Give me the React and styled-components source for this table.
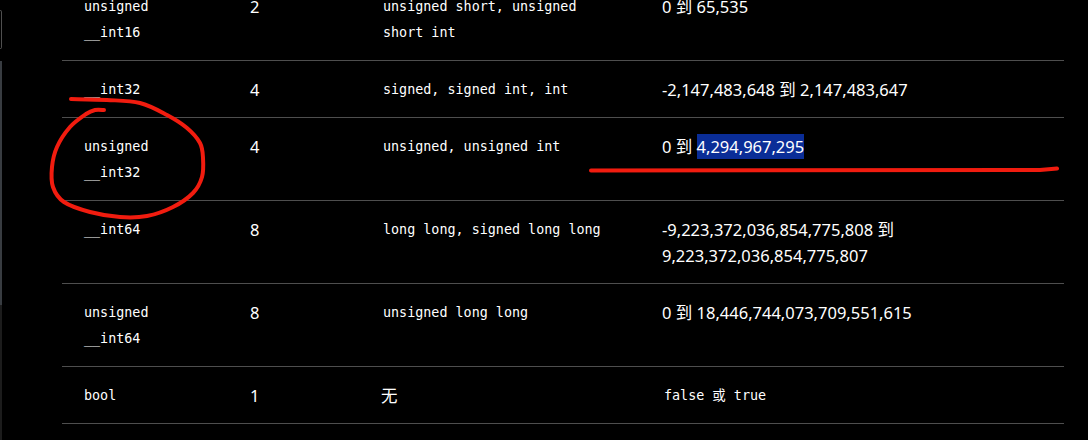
import React from "react";
import styled, { createGlobalStyle } from "styled-components";

const GlobalStyle = createGlobalStyle`
  html, body {
    margin: 0;
    padding: 0;
    background: #000;
    overflow: hidden;
  }
`;

const Frame = styled.div`
  position: relative;
  display: flex;
  width: 1088px;
  height: 440px;
  overflow: hidden;
  background: #000;
`;

const SideRail = styled.div`
  width: 2px;
  display: flex;
  flex-direction: column;
  flex-shrink: 0;
`;

const RailBox = styled.div`
  margin-top: 10px;
  height: 37px;
  border: 1px solid #4f4f4f;
  border-left: none;
  border-radius: 0 2px 2px 0;
`;

const RailThumb = styled.div`
  margin-top: 12px;
  height: 244px;
  background: #383c41;
`;

const RailTrack = styled.div`
  flex: 1;
  background: #1c1c1c;
`;

const Main = styled.main`
  flex: 1;
  padding-left: 60px;
`;

const Table = styled.table`
  width: 1002px;
  margin-top: -22px;
  border-collapse: collapse;
  table-layout: fixed;
  color: #fff;
  font-family: "Noto Sans", "Noto Sans CJK SC", sans-serif;
  font-size: 16.5px;
  line-height: 26px;
`;

const Row = styled.tr`
  border-bottom: 1px solid #4e4e4e;
`;

const Cell = styled.td`
  padding: 16px 30px 14px 20px;
  height: 26px;
  vertical-align: top;
  word-wrap: break-word;
`;

const Code = styled.code`
  display: block;
  padding-left: 2px;
  font-family: "DejaVu Sans Mono", "Noto Sans CJK SC", monospace;
  font-size: 13.4px;
  line-height: 26px;
  color: #fff;
`;

const Selected = styled.span`
  display: inline-block;
  background: #0a2d97;
  line-height: 25px;
`;

const Marks = styled.svg`
  position: absolute;
  left: 0;
  top: 0;
  pointer-events: none;
`;

const rows = [
  { type: "unsigned __int16", size: "2", alias: "unsigned short, unsigned short int", range: "0 到 65,535" },
  { type: "__int32", size: "4", alias: "signed, signed int, int", range: "-2,147,483,648 到 2,147,483,647" },
  { type: "unsigned __int32", size: "4", alias: "unsigned, unsigned int", range: "0 到 ", selected: "4,294,967,295" },
  { type: "__int64", size: "8", alias: "long long, signed long long", range: "-9,223,372,036,854,775,808 到 9,223,372,036,854,775,807" },
  { type: "unsigned __int64", size: "8", alias: "unsigned long long", range: "0 到 18,446,744,073,709,551,615" },
  { type: "bool", size: "1", plainAlias: "无", codeRange: "false 或 true" },
];

// smooth hand-drawn stroke through points (catmull-rom -> cubic)
const smooth = (pts) => {
  let d = `M${pts[0][0]} ${pts[0][1]}`;
  for (let i = 0; i < pts.length - 1; i++) {
    const p0 = pts[i - 1] || pts[i];
    const p1 = pts[i];
    const p2 = pts[i + 1];
    const p3 = pts[i + 2] || p2;
    const c1 = [p1[0] + (p2[0] - p0[0]) / 6, p1[1] + (p2[1] - p0[1]) / 6];
    const c2 = [p2[0] - (p3[0] - p1[0]) / 6, p2[1] - (p3[1] - p1[1]) / 6];
    d += ` C${c1[0]} ${c1[1]} ${c2[0]} ${c2[1]} ${p2[0]} ${p2[1]}`;
  }
  return d;
};

const loop = [
  [71, 99], [107, 100], [140, 103], [167, 115], [187, 128], [200, 143],
  [203, 158], [202, 177], [193, 193], [173, 207], [147, 216], [120, 217],
  [90, 212], [64, 202], [53, 187], [52, 167], [57, 147], [70, 127],
  [86, 114], [95, 110], [104, 110],
];

const App = () => {
  return (
    <>
      <GlobalStyle />
      <Frame>
        <SideRail>
          <RailBox />
          <RailThumb />
          <RailTrack />
        </SideRail>
        <Main>
          <Table>
            <colgroup>
              <col style={{ width: 168 }} />
              <col style={{ width: 131 }} />
              <col style={{ width: 281 }} />
              <col style={{ width: 422 }} />
            </colgroup>
            <tbody>
              {rows.map((r, i) => (
                <Row key={i}>
                  <Cell>
                    <Code>{r.type}</Code>
                  </Cell>
                  <Cell>{r.size}</Cell>
                  <Cell>{r.plainAlias ? r.plainAlias : <Code>{r.alias}</Code>}</Cell>
                  <Cell>
                    {r.codeRange ? (
                      <Code>{r.codeRange}</Code>
                    ) : (
                      <>
                        {r.range}
                        {r.selected && <Selected>{r.selected}</Selected>}
                      </>
                    )}
                  </Cell>
                </Row>
              ))}
            </tbody>
          </Table>
        </Main>
        <Marks width="1088" height="440" viewBox="0 0 1088 440">
          <path
            d={smooth(loop)}
            fill="none"
            stroke="#f11c0f"
            strokeWidth="4"
            strokeLinecap="round"
            strokeLinejoin="round"
          />
          <path
            d="M591 170.5 L1040 170 L1057 168.5"
            fill="none"
            stroke="#f11c0f"
            strokeWidth="4"
            strokeLinecap="round"
            strokeLinejoin="round"
          />
        </Marks>
      </Frame>
    </>
  );
};

export default App;
